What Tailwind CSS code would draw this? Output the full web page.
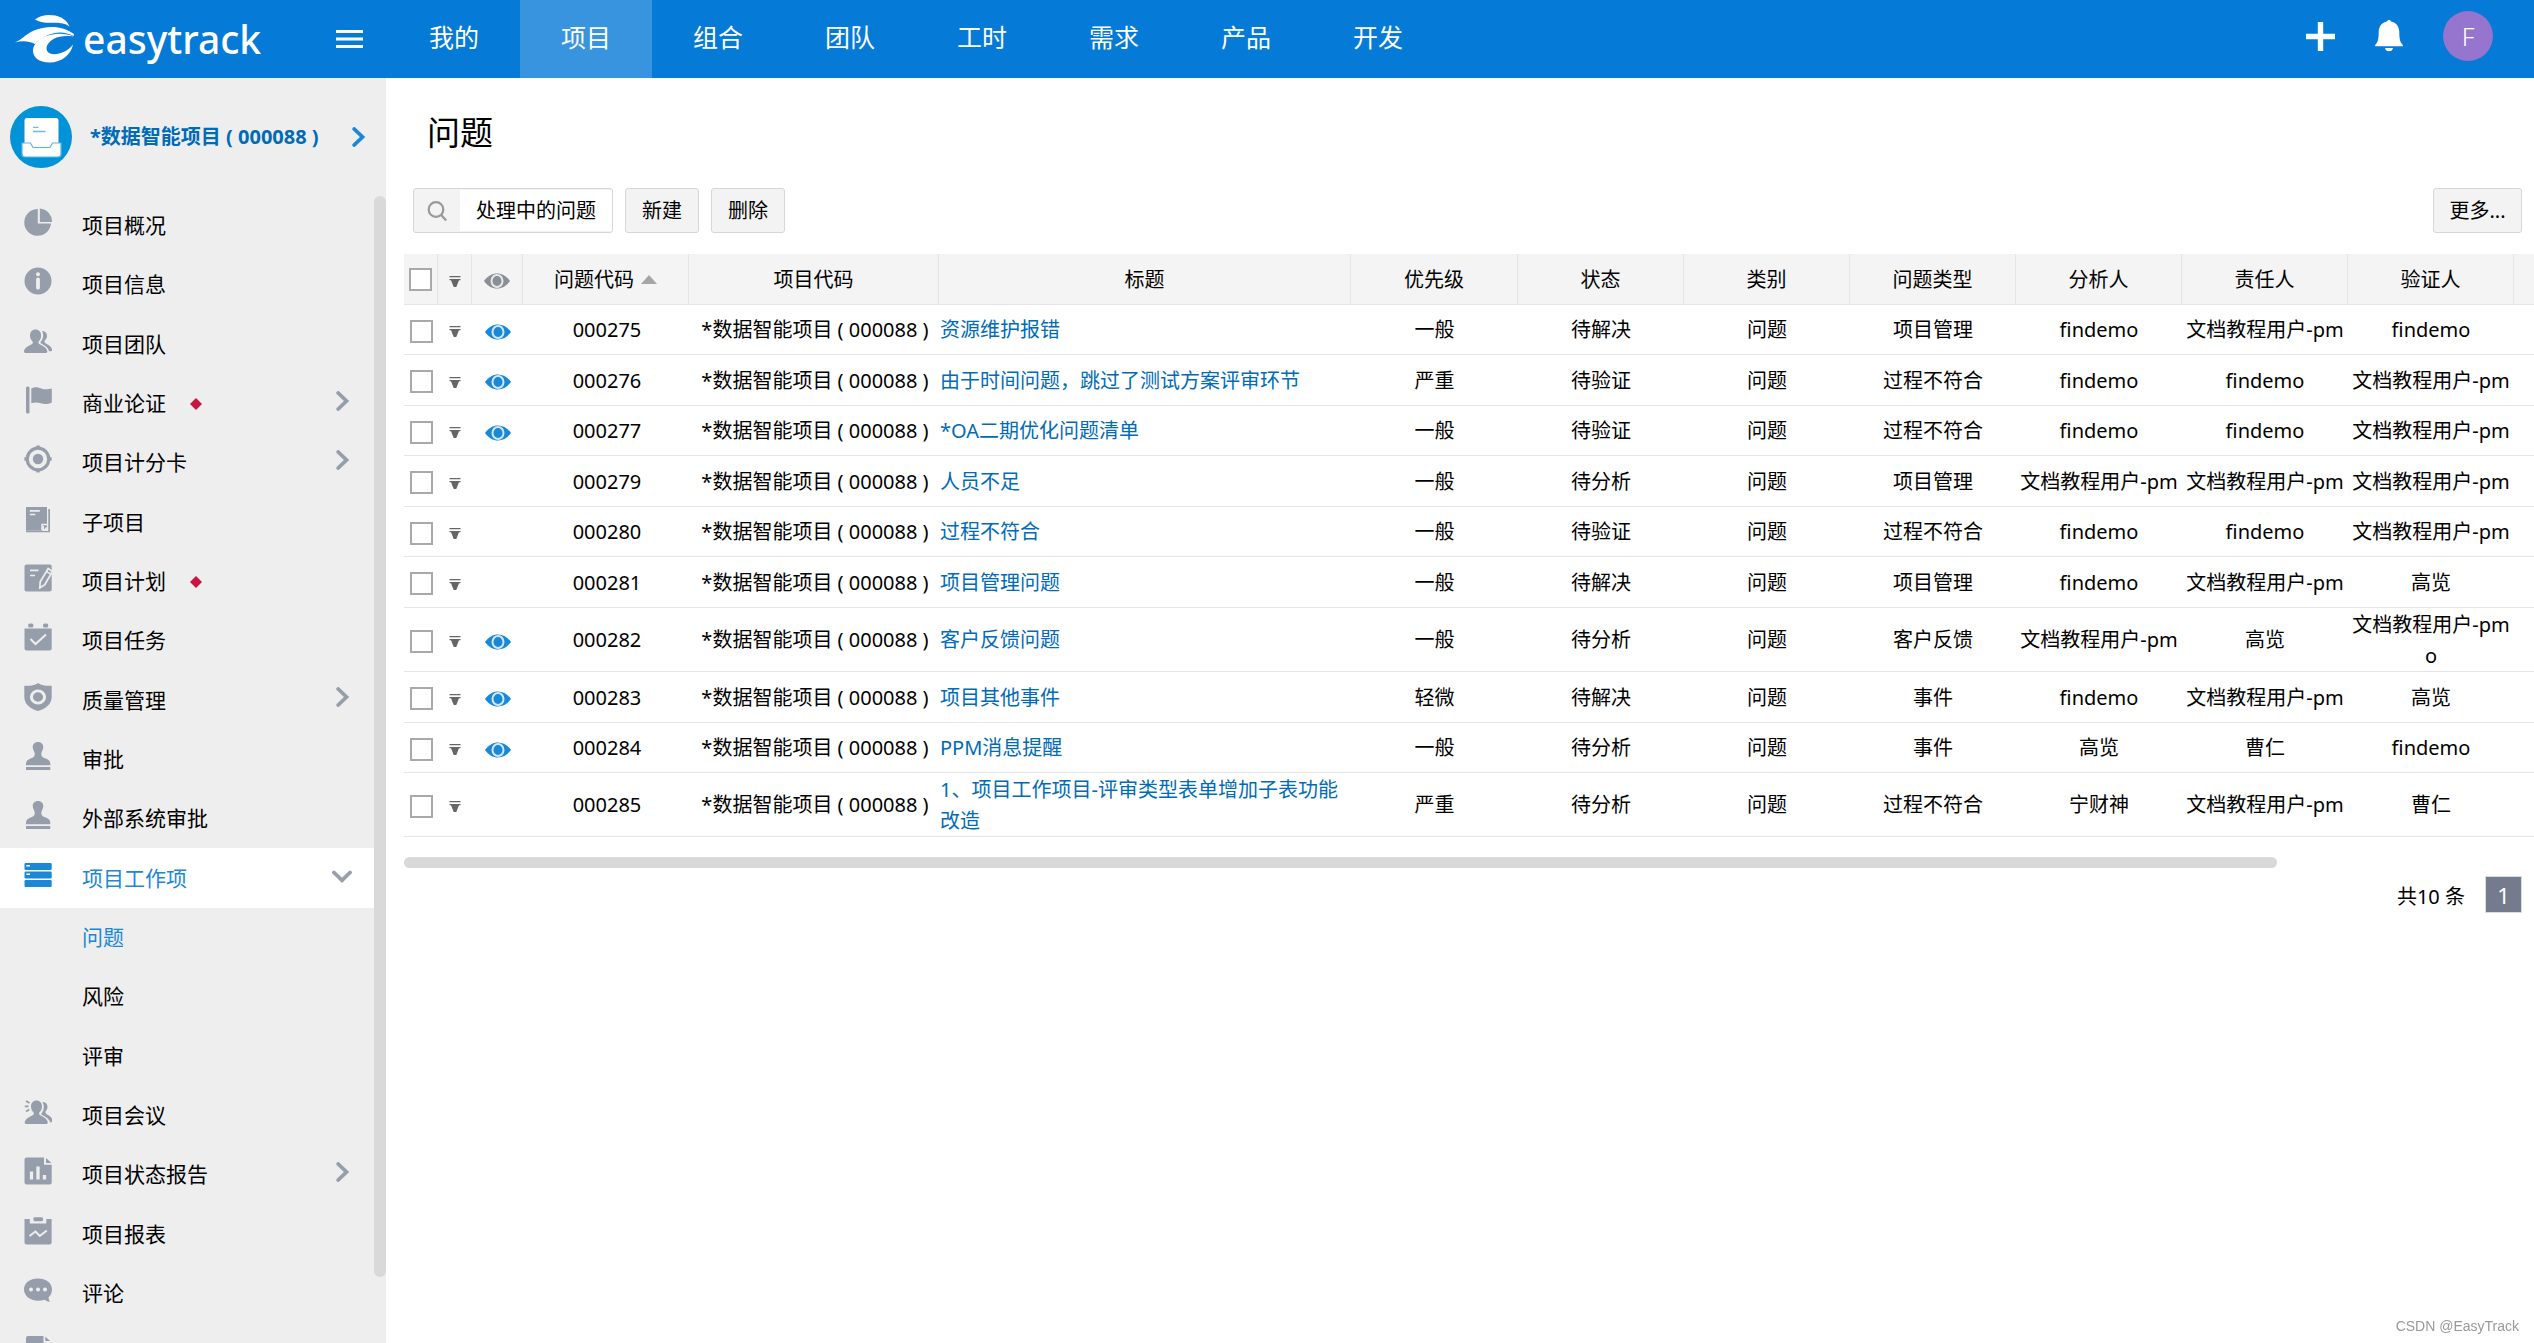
<!DOCTYPE html>
<html lang="zh-CN">
<head>
<meta charset="utf-8">
<meta name="viewport" content="width=device-width, initial-scale=1">
<title>问题 - easytrack</title>
<script src="https://cdn.jsdelivr.net/npm/@tailwindcss/browser@4"></script>
</head>
<body class="flex h-screen flex-col overflow-hidden bg-white font-['Noto_Sans','Noto_Sans_CJK_SC',sans-serif] text-[20px] text-black">

<svg class="hidden" aria-hidden="true">
  <symbol id="i-pie" viewBox="0 0 28 28"><path d="M13.8 1A13.4 13.4 0 1 0 27 15.6H13.8Z"/><path d="M15.8 0.4A13.2 13.2 0 0 1 28 14H15.8Z"/></symbol>
  <symbol id="i-info" viewBox="0 0 28 28"><circle cx="14" cy="14" r="13.5"/><circle cx="14" cy="7.3" r="2" fill="#eee"/><rect x="12.1" y="10.6" width="3.8" height="12" rx="1.9" fill="#eee"/></symbol>
  <symbol id="i-team" viewBox="0 0 28 28"><path d="M11.5 2.5c3.4 0 5.6 2.5 5.6 6 0 2.6-.9 4.7-2.5 5.9-.5 1.600 0 2.300 1.500 3 4 1.800 7.100 3.800 7.200 7.200 0 .8-.5 1.300-1.300 1.300H1.400C.6 25.900 0 25.400 0 24.600c.100-3.400 3.200-5.400 7.200-7.200 1.500-.7 2-1.400 1.400-3C7 13.200 6 11.100 6 8.500c0-3.500 2.100-6 5.500-6Z"/><path d="M18 4c2.600 0 5 1.500 5 4.800 0 2.200-1 3.700-2.400 4.900-.4 1.300.2 2 1.400 2.700 3 1.700 6 3.300 6 6.300 0 1-.6 1.500-1.600 1.500H25c-.7-2.900-2.800-4.900-7.400-7.400-1-.6-1.300-1-1-1.700 1.700-2 2.500-4.200 2.500-6.600 0-1.600-.3-3-1.100-4.500Z"/></symbol>
  <symbol id="i-flag" viewBox="0 0 28 28"><rect x="2" y="0.500" width="3.500" height="27" rx="1.500"/><path d="M7.300 2.500c4-2.100 7-1.100 10 0 3.300 1.200 6.500 1 10.500 0v14c-4 2-7.500 2-11 .8-3-1-6-1-9.500 0Z"/></symbol>
  <symbol id="i-target" viewBox="0 0 28 28"><circle cx="14" cy="14" r="10.800" fill="none" stroke="currentColor" stroke-width="3.200"/><circle cx="14" cy="14" r="5.200"/><path d="M12.300 0.400h3.400V3h-3.400zM12.300 25h3.400v2.600h-3.400zM.4 12.300H3v3.400H.4zM25 12.300h2.600v3.400H25z"/></symbol>
  <symbol id="i-book" viewBox="0 0 28 28"><path d="M2 2h21v19h-4.800v4.800H2zM24.300 4H26v23.300H2v-1.200h22.300z"/><path d="M5.800 5.900h10M5.800 9.500h5.500" stroke="#eee" stroke-width="1.600" fill="none"/><path d="M18 25V19.500h5.500" stroke="#eee" stroke-width="1.500" fill="none"/><path d="M20 21h3.500L20 24.500z"/></symbol>
  <symbol id="i-plan" viewBox="0 0 28 28"><rect x="0.500" y="0.500" width="27.200" height="27" rx="2"/><path d="M6 6.400h8.500M6 11.500h5" stroke="#eee" stroke-width="1.700"/><path d="M24.200 4.500 16.200 17.800l-.4 6 5-3.200L28.400 7.500Z" stroke="#eee" stroke-width="1.700" fill="currentColor"/><path d="M22.600 7.600l4.300 2.600" stroke="#eee" stroke-width="1.500"/></symbol>
  <symbol id="i-task" viewBox="0 0 28 28"><path d="M.5 5.500h27.200v20a2 2 0 0 1-2 2H2.500a2 2 0 0 1-2-2z"/><rect x="4.200" y="0.500" width="5.200" height="4" rx="1.500"/><rect x="19" y="0.500" width="5.200" height="4" rx="1.500"/><path d="M6.500 16l5 5 10.500-9.500" fill="none" stroke="#eee" stroke-width="2"/></symbol>
  <symbol id="i-shield" viewBox="0 0 28 30" preserveAspectRatio="none"><path d="M14 0c2 1.500 4.500 2.600 7.500 2.900 2.200.2 4.200.1 6.200 0V15c0 7-5.200 12.300-13.700 15C5.500 27.300.3 22 .3 15V2.900c2 .1 4 .2 6.200 0C9.500 2.600 12 1.500 14 0Z"/><circle cx="14" cy="15" r="6.600" fill="none" stroke="#eee" stroke-width="3"/></symbol>
  <symbol id="i-stamp" viewBox="0 0 28 28"><path d="M14 0c3.200 0 5.300 2.200 5.300 5 0 3-2.100 4.500-2 7.500.1 2.600 2.200 3.200 5 4.200 2.700 1 4 2.700 4 5.300v1.200H2V22c0-2.600 1.300-4.300 4-5.300 2.800-1 4.600-1.600 4.800-4.200.1-3-2.100-4.500-2.100-7.500 0-2.800 2.100-5 5.300-5Z"/><rect x="2" y="25" width="24.300" height="3"/></symbol>
  <symbol id="i-stack" viewBox="0 0 28 28"><rect x="0.500" y="2" width="27.200" height="7" rx="1.200"/><rect x="0.500" y="10.500" width="27.200" height="7" rx="1.200"/><rect x="0.500" y="19" width="27.200" height="7" rx="1.200"/><path d="M2.300 4.700H6M2.300 13.200H6" stroke="#fff" stroke-width="1.500"/></symbol>
  <symbol id="i-meet" viewBox="0 0 28 28"><path d="M12.500 2.500c3.300 0 5.500 2.500 5.500 6 0 2.600-1.100 4.700-2.700 5.900-.4 1.600 0 2.300 1.300 3 4 1.800 7 3.800 7.200 7.200 0 .8-.5 1.300-1.300 1.300H2c-.8 0-1.300-.5-1.300-1.300.2-3.400 3.500-5.400 7.500-7.200 1.400-.7 1.800-1.400 1.400-3C8 13.200 7 11.100 7 8.500c0-3.500 2.200-6 5.500-6Z"/><path d="M18.500 4c2.700 0 5 1.500 5 4.800 0 2.200-.9 3.700-2.200 4.900-.4 1.300 1.500 2.600 2.700 3.300 3 1.700 4.500 3.600 4.500 5.600 0 1-1 1.900-2.200 1.900-.9-2.900-4.100-5.400-8.300-7.400-.8-.4-.9-1-.5-1.700 1.600-2 2.300-4.200 2.300-6.600 0-1.600-.4-3.200-1.300-4.800Z"/><path d="M2 3l3.500 2M.8 8.400h3.700M2 13.500l3.200-2" stroke="currentColor" stroke-width="1.900"/></symbol>
  <symbol id="i-report" viewBox="0 0 28 28"><path d="M2.500.5H20v7.300h7.700v17.700a2 2 0 0 1-2 2H2.500a2 2 0 0 1-2-2v-23a2 2 0 0 1 2-2Z"/><path d="M22 1l5.500 5H22z"/><path d="M7.500 22.500v-8M14 22.500v-13M20.500 22.500v-4.500" stroke="#eee" stroke-width="3.300"/></symbol>
  <symbol id="i-chart" viewBox="0 0 28 28"><path d="M.5 2h5.300v4.500h16.500V2h5.300v23.500a2 2 0 0 1-2 2H2.500a2 2 0 0 1-2-2z"/><rect x="9.500" y="0.300" width="9.500" height="4" rx="1.200"/><path d="M5.500 19l6-4.500 4.300 4.500 7-5.500" fill="none" stroke="#eee" stroke-width="2"/></symbol>
  <symbol id="i-chat" viewBox="0 0 28 28"><path d="M14 2.500c8 0 14 4.500 14 10.800 0 3.500-1.300 6.200-3.500 8.200.1 1.500.6 3 1.500 4.300-2 .1-3.800-.7-5.300-2-2 .6-4.300.9-6.700.9C6 24.700 0 20 0 13.300 0 7 6 2.500 14 2.500Z"/><g fill="#eee"><circle cx="7" cy="13.600" r="2"/><circle cx="14" cy="13.600" r="2"/><circle cx="21" cy="13.600" r="2"/></g></symbol>
  <symbol id="i-doc" viewBox="0 0 28 28"><path d="M4 1h15.500v7H26v19H2V3a2 2 0 0 1 2-2Z"/><path d="M21.300 1.500 26 6h-4.700z"/></symbol>
  <symbol id="i-right" viewBox="0 0 14 20"><path d="M2.200 2l8.300 8-8.300 8" fill="none" stroke="currentColor" stroke-width="3.800" stroke-linecap="round" stroke-linejoin="miter"/></symbol>
  <symbol id="i-down" viewBox="0 0 20 14"><path d="M2 2.500l8 7.800 8-7.800" fill="none" stroke="currentColor" stroke-width="3.800" stroke-linecap="round"/></symbol>
  <symbol id="i-diamond" viewBox="0 0 12 12"><path d="M6 0l6 6-6 6-6-6z"/></symbol>
  <symbol id="i-menu" viewBox="0 0 12 11"><path d="M.5 0h11v1.200H.5zM.5 3h11v1.200H.5zM2 4.200h8L7.300 11H4.700z"/></symbol>
  <symbol id="i-eye" viewBox="0 0 26 16"><path d="M0 8C3.500 3 8 .5 13 .5S22.500 3 26 8c-3.500 5-8 7.500-13 7.500S3.500 13 0 8Z"/><ellipse cx="13" cy="8" rx="5.500" ry="6" fill="none" stroke="#fff" stroke-opacity=".8" stroke-width="2"/><ellipse cx="13" cy="8" rx="3.300" ry="4.200"/></symbol>
</svg>

<header class="flex h-[78px] shrink-0 items-center bg-[#057ad7] text-white">
  <a href="#" class="flex w-[336px] shrink-0 items-center pl-[15px]" aria-label="easytrack">
    <svg class="h-12 w-[60px] shrink-0" viewBox="0 0 60 48" fill="currentColor" aria-hidden="true">
      <path d="M20 4.500C25 1 29 0 34 0c9 0 17 3 20.500 11.500C50 8.500 46 7.800 40 7.800 32 8 26 8 20 4.500Z"/>
      <path d="M0 27.500C7 24.500 10 19.500 19 15.500c13-5.500 29-5 40 3.500l-.5 2C52 17.500 45 16.500 38 18.500 30 20.500 25 24 20 29 14 26 7 25.500 0 27.500Z"/>
      <path d="M58.500 21.500C51 20.500 44 21 39 23.800c-6 3.200-8.500 8-7 12 2.500 5.700 18 4.500 26-6.300C56 39.500 47 47.500 34.500 47.500 24 47.500 17.500 42 18 35c.5-6 6-12 15-14.500 8-2.300 18-2.500 25.500 1Z"/>
    </svg>
    <span class="ml-2 text-[39px] leading-[48px] font-medium">easytrack</span>
  </a>
  <button type="button" aria-label="菜单" class="flex w-[52px] shrink-0"><svg class="h-5 w-[27px]" viewBox="0 0 27 20" fill="currentColor"><path d="M0 1h27v3H0zM0 8.500h27v3H0zM0 16h27v3H0z"/></svg></button>
  <nav class="flex h-full text-[25px] leading-[36px]">
    <a href="#" class="flex w-[132px] items-center justify-center pb-1">我的</a>
    <a href="#" class="flex w-[132px] items-center justify-center bg-[#3894de] pb-1">项目</a>
    <a href="#" class="flex w-[132px] items-center justify-center pb-1">组合</a>
    <a href="#" class="flex w-[132px] items-center justify-center pb-1">团队</a>
    <a href="#" class="flex w-[132px] items-center justify-center pb-1">工时</a>
    <a href="#" class="flex w-[132px] items-center justify-center pb-1">需求</a>
    <a href="#" class="flex w-[132px] items-center justify-center pb-1">产品</a>
    <a href="#" class="flex w-[132px] items-center justify-center pb-1">开发</a>
  </nav>
  <div class="ml-auto flex items-center gap-10 pr-[41px] pb-[6px]">
    <button type="button" aria-label="新增"><svg class="size-[29px]" viewBox="0 0 29 29" fill="currentColor"><path d="M11.800 0h5.400v11.800H29v5.400H17.200V29h-5.400V17.200H0v-5.400h11.800z"/></svg></button>
    <button type="button" aria-label="通知"><svg class="h-8 w-7" viewBox="0 0 28 32" fill="currentColor"><path d="M14 0c1 0 1.800.7 2 1.600 5.200 1 8.200 5 8.300 10.400.1 6 .4 10 3.500 13v1.300H.2V25c3.100-3 3.400-7 3.500-13C3.800 6.600 6.800 2.600 12 1.600 12.200.7 13 0 14 0Z"/><path d="M10 28h8c-.3 2-1.900 3.300-4 3.300S10.300 30 10 28Z"/></svg></button>
    <button type="button" class="size-[50px] rounded-full bg-[#9575cd] text-[25px] leading-[50px] font-light">F</button>
  </div>
</header>

<div class="flex min-h-0 flex-1">
  <aside class="flex w-[386px] shrink-0 flex-col bg-[#eee]">
    <a href="#" class="flex h-[118px] shrink-0 items-center pl-[10px] text-[#006bb7]">
      <svg class="size-[62px] shrink-0" viewBox="0 0 62 62" aria-hidden="true"><circle cx="31" cy="31" r="31" fill="#0093d8"/><path d="M17 12h29a2.500 2.500 0 0 1 2.500 2.500v29h-34v-29A2.500 2.500 0 0 1 17 12Z" fill="#fff"/><path d="M23 21.300h5.500M23 25.500h12.500" stroke="#67bde8" stroke-width="1.300"/><path d="M12 37h8.500l2.500 4.500h17L42.500 37H51v11a3 3 0 0 1-3 3H15a3 3 0 0 1-3-3z" fill="#fff" stroke="#58b7e6" stroke-width="1.200"/></svg>
      <span class="ml-[18px] flex-1 text-[20px] leading-7 font-bold whitespace-nowrap">*数据智能项目 ( 000088 )</span>
      <svg class="mr-[20px] h-5 w-[14px] text-[#1a88d6]"><use href="#i-right"/></svg>
    </a>
    <div class="flex min-h-0 flex-1">
      <ul id="menu" class="flex-1 overflow-hidden text-[21px] leading-[30px]"></ul>
      <div class="h-[1081px] w-3 rounded-full bg-[#d9d9d9]"></div>
    </div>
  </aside>

  <main class="min-w-0 flex-1">
    <h1 class="flex h-[110px] items-center pl-[41px] text-[33px] leading-[48px]">问题</h1>
    <div class="flex h-[45px] gap-3 pr-3 pl-[27px]">
      <div class="flex w-[200px] rounded-[3px] border border-[#d6d6d6] bg-[#f3f3f3] py-px">
        <button type="button" aria-label="搜索" class="flex w-[46px] items-center justify-center"><svg class="size-5" viewBox="0 0 20 20" fill="none" stroke="#999" stroke-width="2.200"><circle cx="9" cy="8.500" r="7.300"/><path d="M14.200 14l5 5.500"/></svg></button>
        <button type="button" class="flex-1 bg-white">处理中的问题</button>
      </div>
      <button type="button" class="w-[74px] rounded-[3px] border border-[#d6d6d6] bg-[#f3f3f3]">新建</button>
      <button type="button" class="w-[74px] rounded-[3px] border border-[#d6d6d6] bg-[#f3f3f3]">删除</button>
      <button type="button" class="ml-auto w-[89px] rounded-[3px] border border-[#d6d6d6] bg-[#f3f3f3]">更多...</button>
    </div>

    <div class="mt-[21px] ml-[18px] overflow-hidden">
      <table class="w-[2310px] table-fixed border-separate border-spacing-0 leading-[31px]">
        <colgroup>
          <col class="w-[34px]"><col class="w-[34px]"><col class="w-[51px]"><col class="w-[166px]"><col class="w-[250px]"><col class="w-[412px]">
          <col class="w-[167px]"><col class="w-[166px]"><col class="w-[166px]"><col class="w-[166px]"><col class="w-[166px]"><col class="w-[166px]"><col class="w-[166px]"><col>
        </colgroup>
        <thead>
          <tr class="h-[51px] bg-[#f4f4f4] *:border-r *:border-b *:border-[#e6e6ea] *:font-normal">
            <th><input type="checkbox" aria-label="全选" class="mx-auto block size-[23px] appearance-none border-2 border-[#a9a9a9] bg-white"></th>
            <th><svg class="mx-auto mt-1 h-[11px] w-3 fill-[#666]"><use href="#i-menu"/></svg></th>
            <th><svg class="mx-auto mt-1 h-4 w-[26px] fill-[#8a8e96]"><use href="#i-eye"/></svg></th>
            <th><span class="flex items-center justify-center gap-[7px]">问题代码<svg class="h-[9px] w-4" viewBox="0 0 16 9" fill="#a6a6a6"><path d="M8 0l8 9H0z"/></svg></span></th>
            <th>项目代码</th><th>标题</th><th>优先级</th><th>状态</th><th>类别</th><th>问题类型</th><th>分析人</th><th>责任人</th><th>验证人</th><th></th>
          </tr>
        </thead>
        <tbody id="rows"></tbody>
      </table>
    </div>
    <div class="mt-5 mr-[257px] ml-[18px] h-[11px] rounded-full bg-[#d9d9d9]"></div>
    <div class="mt-2 flex items-center justify-end gap-5 pr-3">
      <span class="pt-1 leading-7">共10 条</span>
      <button type="button" class="size-[37px] border border-[#d9dce2] bg-[#737b8c] text-[22px] leading-[34px] text-white">1</button>
    </div>
  </main>
</div>
<div class="fixed right-[15px] bottom-2 font-['Liberation_Sans',sans-serif] text-[14px] leading-[18px] text-[#999]">CSDN @EasyTrack</div>

<script>
const menu = [
  ['pie', '项目概况'], ['info', '项目信息'], ['team', '项目团队'], ['flag', '商业论证', 'right', true],
  ['target', '项目计分卡', 'right'], ['book', '子项目'], ['plan', '项目计划', '', true], ['task', '项目任务'],
  ['shield', '质量管理', 'right'], ['stamp', '审批'], ['stamp', '外部系统审批'], ['stack', '项目工作项', 'down'],
  ['', '问题'], ['', '风险'], ['', '评审'], ['meet', '项目会议'], ['report', '项目状态报告', 'right'],
  ['chart', '项目报表'], ['chat', '评论'], ['doc', '']
];
document.getElementById('menu').innerHTML = menu.map(([icon, text, arrow, dot], i) => `
  <li class="h-[59px] nth-[3n]:h-[60px]">
    <a href="#" class="flex h-full items-center pl-6 ${i === 11 ? 'bg-white text-[#1a88d6]' : i === 12 ? 'text-[#1a88d6]' : ''}">
      <span class="mr-[30px] w-7 shrink-0 pb-[7px]">${icon ? `<svg class="size-7 ${i === 11 ? 'fill-[#1a88d6] text-[#1a88d6]' : 'fill-[#979eab] text-[#979eab]'}"><use href="#i-${icon}"/></svg>` : ''}</span>
      <span class="pb-px">${text}</span>
      ${dot ? '<svg class="ml-6 size-3 fill-[#cc1440]"><use href="#i-diamond"/></svg>' : ''}
      ${arrow === 'right' ? '<span class="mr-6 ml-auto pb-[6px]"><svg class="h-5 w-[14px] text-[#979eab]"><use href="#i-right"/></svg></span>' : ''}
      ${arrow === 'down' ? '<span class="mr-[22px] ml-auto pb-[2px]"><svg class="h-[14px] w-5 text-[#979eab]"><use href="#i-down"/></svg></span>' : ''}
    </a>
  </li>`).join('');

const P = '文档教程用户-pm', F = 'findemo';
const issues = [
  ['000275', 1, '资源维护报错', '一般', '待解决', '项目管理', F, P, F],
  ['000276', 1, '由于时间问题，跳过了测试方案评审环节', '严重', '待验证', '过程不符合', F, F, P],
  ['000277', 1, '*OA二期优化问题清单', '一般', '待验证', '过程不符合', F, F, P],
  ['000279', 0, '人员不足', '一般', '待分析', '项目管理', P, P, P],
  ['000280', 0, '过程不符合', '一般', '待验证', '过程不符合', F, F, P],
  ['000281', 0, '项目管理问题', '一般', '待解决', '项目管理', F, P, '高览'],
  ['000282', 1, '客户反馈问题', '一般', '待分析', '客户反馈', P, '高览', P + 'o'],
  ['000283', 1, '项目其他事件', '轻微', '待解决', '事件', F, P, '高览'],
  ['000284', 1, 'PPM消息提醒', '一般', '待分析', '事件', '高览', '曹仁', F],
  ['000285', 0, '1、项目工作项目-评审类型表单增加子表功能改造', '严重', '待分析', '过程不符合', '宁财神', P, '曹仁']
];
document.getElementById('rows').innerHTML = issues.map(([code, seen, title, level, state, type, a, b, c], i) => `
  <tr class="${i === 6 || i === 9 ? 'h-[64px]' : 'h-[50px] even:h-[51px]'} text-center break-all *:border-b *:border-[#e6e6ea] *:align-middle">
    <td class="pt-[3px]"><input type="checkbox" aria-label="选择 ${code}" class="mx-auto block size-[23px] appearance-none border-2 border-[#a9a9a9] bg-white"></td>
    <td><button type="button" aria-label="操作" class="mx-auto block pt-1"><svg class="h-[11px] w-3 fill-[#666]"><use href="#i-menu"/></svg></button></td>
    <td>${seen ? '<svg class="mx-auto mt-1 h-4 w-[26px] fill-[#1a88d6]"><use href="#i-eye"/></svg>' : ''}</td>
    <td class="pl-[2px]">${code}</td>
    <td class="pl-[2px] whitespace-nowrap">*数据智能项目 ( 000088 )</td>
    <td class="pl-px text-left"><a href="#" class="text-[#006bb7]">${title}</a></td>
    <td>${level}</td><td>${state}</td><td>问题</td><td>${type}</td><td>${a}</td><td>${b}</td><td>${c}</td><td></td>
  </tr>`).join('');
</script>
</body>
</html>
